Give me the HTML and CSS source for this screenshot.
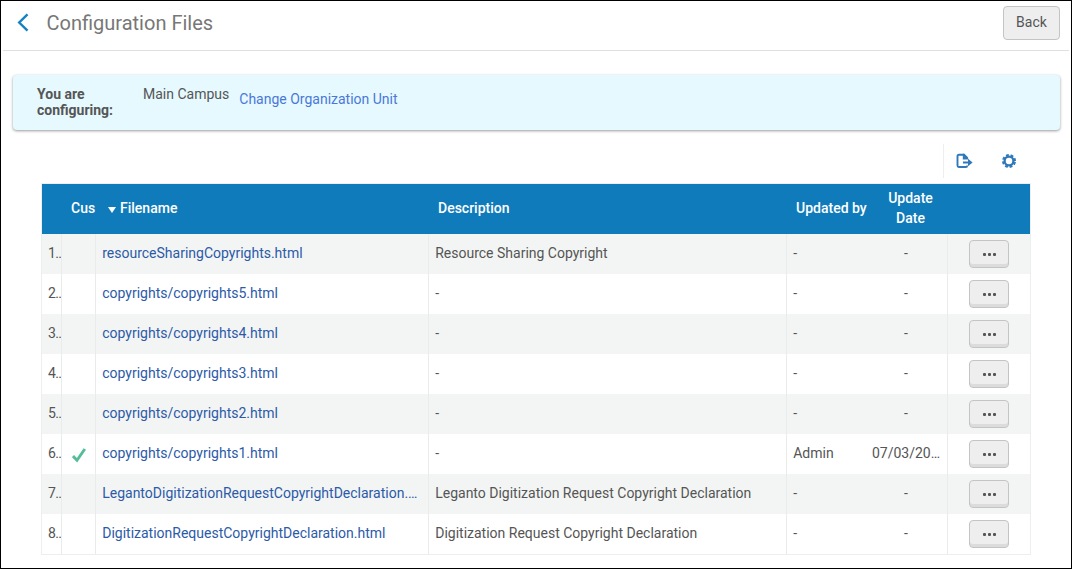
FILE: index.html
```html
<!DOCTYPE html>
<html lang="en">
<head>
    <meta charset="UTF-8">
    <meta name="viewport" content="width=device-width, initial-scale=1.0">
    <title>Configuration Files</title>
    <link rel="stylesheet" href="styles.css">
</head>
<body>
    <header class="page-header">
        <svg class="back-arrow" width="12" height="19" viewBox="0 0 12 19"><path d="M10.5 1.3L2.2 9.5l8.3 8.2" fill="none" stroke="#1580c4" stroke-width="2.4"/></svg>
        <h1>Configuration Files</h1>
        <button type="button" class="back-button">Back</button>
    </header>

    <section class="info-bar">
        <span class="info-label">You are configuring:</span>
        <span class="info-value">Main Campus</span>
        <a class="info-link" href="#">Change Organization Unit</a>
    </section>

    <main>
        <div class="toolbar">
            <svg class="export-icon" width="18" height="16" viewBox="0 0 18 16"><path d="M11.2 4.9L7.8 1.7H2.9Q1.5 1.7 1.5 3.1v9.4q0 1.5 1.4 1.5h6.9q1.4 0 1.4-1.6M7 9.5h6" fill="none" stroke="#2f78b9" stroke-width="1.9"/><path d="M6.8.8h1.6L12.2 4.8V6.6H6.8zM12 5.7L16.6 9.5l-4.6 3.8z" fill="#2f78b9"/></svg>
            <svg class="gear-icon" width="14" height="14" viewBox="0 0 14 14"><circle cx="7" cy="7" r="4.4" fill="none" stroke="#2f78b9" stroke-width="2.3"/><circle cx="7" cy="7" r="6" fill="none" stroke="#2f78b9" stroke-width="2" stroke-dasharray="2.8 1.912" stroke-dashoffset="-.96"/></svg>
        </div>

        <table class="files">
            <colgroup>
                <col class="col-num"><col class="col-cus"><col class="col-name"><col class="col-desc"><col class="col-by"><col class="col-date"><col class="col-menu">
            </colgroup>
            <thead>
                <tr>
                    <th></th>
                    <th class="cus">Cus</th>
                    <th class="name"><span class="sort"></span>Filename</th>
                    <th>Description</th>
                    <th>Updated by</th>
                    <th class="date">Update Date</th>
                    <th></th>
                </tr>
            </thead>
            <tbody>
                <tr>
                    <td class="num">1..</td>
                    <td></td>
                    <td><a href="#">resourceSharingCopyrights.html</a></td>
                    <td>Resource Sharing Copyright</td>
                    <td class="by">-</td>
                    <td class="date">-</td>
                    <td class="menu"><button type="button"><i></i><i></i><i></i></button></td>
                </tr>
                <tr>
                    <td class="num">2..</td>
                    <td></td>
                    <td><a href="#">copyrights/copyrights5.html</a></td>
                    <td>-</td>
                    <td class="by">-</td>
                    <td class="date">-</td>
                    <td class="menu"><button type="button"><i></i><i></i><i></i></button></td>
                </tr>
                <tr>
                    <td class="num">3..</td>
                    <td></td>
                    <td><a href="#">copyrights/copyrights4.html</a></td>
                    <td>-</td>
                    <td class="by">-</td>
                    <td class="date">-</td>
                    <td class="menu"><button type="button"><i></i><i></i><i></i></button></td>
                </tr>
                <tr>
                    <td class="num">4..</td>
                    <td></td>
                    <td><a href="#">copyrights/copyrights3.html</a></td>
                    <td>-</td>
                    <td class="by">-</td>
                    <td class="date">-</td>
                    <td class="menu"><button type="button"><i></i><i></i><i></i></button></td>
                </tr>
                <tr>
                    <td class="num">5..</td>
                    <td></td>
                    <td><a href="#">copyrights/copyrights2.html</a></td>
                    <td>-</td>
                    <td class="by">-</td>
                    <td class="date">-</td>
                    <td class="menu"><button type="button"><i></i><i></i><i></i></button></td>
                </tr>
                <tr>
                    <td class="num">6..</td>
                    <td class="check"><svg width="14" height="15" viewBox="0 0 14 15"><path d="M1 8.1l4 4.2L12.8 1" fill="none" stroke="#56bd9b" stroke-width="2.9"/></svg></td>
                    <td><a href="#">copyrights/copyrights1.html</a></td>
                    <td>-</td>
                    <td class="by">Admin</td>
                    <td class="date">07/03/20…</td>
                    <td class="menu"><button type="button"><i></i><i></i><i></i></button></td>
                </tr>
                <tr>
                    <td class="num">7..</td>
                    <td></td>
                    <td><a href="#">LegantoDigitizationRequestCopyrightDeclaration.…</a></td>
                    <td>Leganto Digitization Request Copyright Declaration</td>
                    <td class="by">-</td>
                    <td class="date">-</td>
                    <td class="menu"><button type="button"><i></i><i></i><i></i></button></td>
                </tr>
                <tr>
                    <td class="num">8..</td>
                    <td></td>
                    <td><a href="#">DigitizationRequestCopyrightDeclaration.html</a></td>
                    <td>Digitization Request Copyright Declaration</td>
                    <td class="by">-</td>
                    <td class="date">-</td>
                    <td class="menu"><button type="button"><i></i><i></i><i></i></button></td>
                </tr>
            </tbody>
        </table>
    </main>
</body>
</html>
```
FILE: styles.css
```css
* {
    box-sizing: border-box;
}
body {
    margin: 0;
    height: 569px;
    border: 1px solid #000;
    background-color: #fff;
    font-family: Roboto, sans-serif;
    font-size: 14px;
    color: #555;
    overflow: hidden;
}
a {
    color: #2c5aa8;
    text-decoration: none;
}
.page-header {
    display: flex;
    align-items: flex-start;
    height: 50px;
    margin: 0 2px;
    padding: 0 9px 0 14px;
    border-bottom: 1px solid #e0e0e0;
}
.back-arrow {
    margin-top: 12px;
}
h1 {
    flex: 1;
    margin: 10px 0 0 17.5px;
    font-size: 20px;
    font-weight: 400;
    line-height: 24px;
    color: #777;
}
.back-button {
    width: 57px;
    height: 34px;
    margin-top: 5px;
    padding: 0 0 2px;
    border: 1px solid #c4c4c4;
    border-radius: 4px;
    background-color: #eee;
    font: inherit;
    color: #555;
}
.info-bar {
    display: flex;
    height: 55px;
    margin: 24px 11px 0 12px;
    padding: 11px 24px;
    border-radius: 4px;
    background-color: #e6f9ff;
    box-shadow: 0 1px 3px rgba(0, 0, 0, 0.4);
    line-height: 16px;
}
.info-label {
    width: 106px;
    padding-right: 20px;
    font-weight: 700;
}
.info-link {
    margin: 5px 0 0 10px;
    color: #4a78d8;
}
main {
    margin: 14px 41px 0 40px;
}
.toolbar {
    display: flex;
    align-items: center;
    width: 87px;
    height: 34px;
    margin: 0 0 5px auto;
    padding-left: 12px;
    border-left: 1px solid #eee;
}
.gear-icon {
    margin-left: 28px;
}
.files {
    width: 990px;
    table-layout: fixed;
    border-collapse: separate;
    border-spacing: 0;
    border: 1px solid #eee;
}
.col-num { width: 20px; }
.col-cus { width: 34px; }
.col-name { width: 333px; }
.col-desc { width: 358px; }
.col-by { width: 78px; }
.col-date { width: 83px; }
.col-menu { width: 82px; }
th {
    height: 50px;
    padding: 0 0 2px 9px;
    background-color: #0f7bba;
    color: #fff;
    font-weight: 500;
    line-height: 20px;
    text-align: left;
    white-space: nowrap;
}
th.name {
    padding-left: 12px;
}
th.date {
    padding: 0 7px 2px 15px;
    white-space: normal;
    text-align: center;
}
.sort {
    display: inline-block;
    margin-right: 4px;
    border: 4px solid transparent;
    border-top: 6px solid #fff;
    border-bottom: 0;
}
td {
    height: 40px;
    padding: 0 0 2px 6.2px;
    border-right: 1px solid #eaecec;
    white-space: nowrap;
    overflow: hidden;
}
td.num {
    padding-left: 6px;
    letter-spacing: -0.6px;
}
td.by {
    border-right: 0;
}
td.date {
    padding-left: 0;
    text-align: center;
}
td:last-child {
    border-right: 0;
}
tbody tr:nth-child(odd) {
    background-color: #f3f5f4;
}
td.check {
    padding: 3px 0 0 10px;
}
.check svg {
    display: block;
}
td.menu {
    padding: 0 0 0 21px;
}
.menu button {
    display: flex;
    align-items: center;
    justify-content: center;
    gap: 2px;
    width: 40px;
    height: 28px;
    padding: 0;
    border: 1px solid #c4c4c4;
    border-radius: 4px;
    background-color: #eee;
    box-shadow: inset 0 -3px 0 #dcdcdc;
}
.menu i {
    width: 3px;
    height: 3px;
    border-radius: 1px;
    background-color: #555;
}
```
